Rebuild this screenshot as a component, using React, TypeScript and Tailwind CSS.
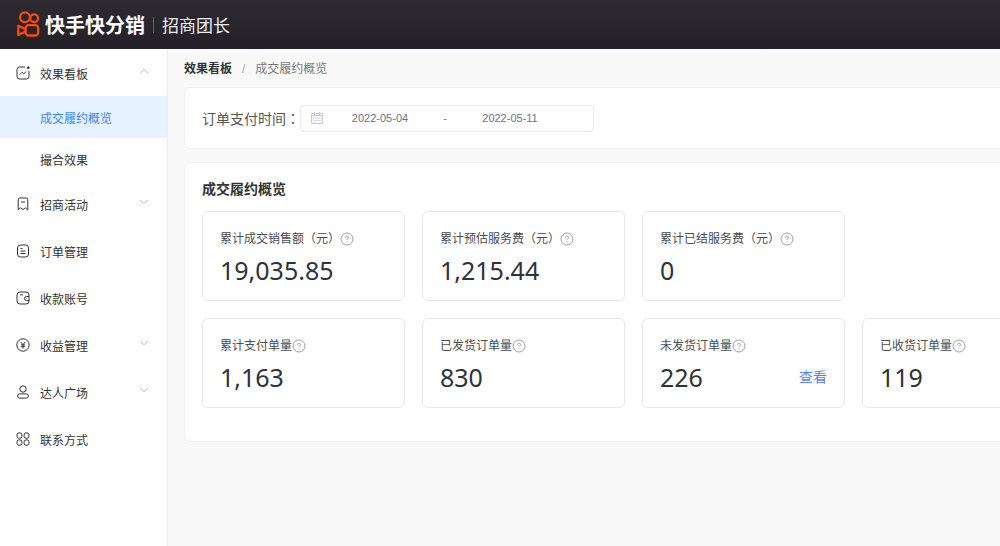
import { useState } from "react";
import type { ReactNode } from "react";
import { ChevronDown, ChevronUp } from "lucide-react";

type MenuItem = {
  label: string;
  icon: ReactNode;
  children?: string[];
};

type Metric = {
  label: string;
  value: string;
  link?: string;
};

const MENU: MenuItem[] = [
  {
    label: "效果看板",
    icon: (
      <>
        <path d="M9 1H3.500A2.500 2.500 0 0 0 1 3.500v7A2.500 2.500 0 0 0 3.500 13h7a2.500 2.500 0 0 0 2.500-2.500V5" />
        <path d="M3.800 8.500 6 6.300l1.700 1.600 2.500-2.300" />
        <circle cx="12.300" cy="1.700" r="0.900" fill="currentColor" />
      </>
    ),
    children: ["成交履约概览", "撮合效果"],
  },
  {
    label: "招商活动",
    icon: (
      <>
        <path d="M2.200 12.900V2.700A1.600 1.600 0 0 1 3.800 1h6.400a1.600 1.600 0 0 1 1.600 1.700v10.200l-2.500-2.100L7 12.600l-2.300-1.800z" />
        <path d="M5 5h4" />
      </>
    ),
    children: [],
  },
  {
    label: "订单管理",
    icon: (
      <>
        <rect x="1.500" y="1" width="11" height="12" rx="3" />
        <path d="M4.500 4.500h2M4.500 7h5M4.500 9.500h5" />
      </>
    ),
  },
  {
    label: "收款账号",
    icon: (
      <>
        <path d="M13 5.500V4a3 3 0 0 0-3-3H4a3 3 0 0 0-3 3v6a3 3 0 0 0 3 3h6a3 3 0 0 0 3-3V5.500h-2.500a2 2 0 0 0 0 4H13" />
        <path d="M4 3.800h3M10.500 7.500h.4" />
      </>
    ),
  },
  {
    label: "收益管理",
    icon: (
      <>
        <circle cx="7" cy="7" r="6.200" />
        <path d="m4.800 4 2.200 2.700L9.200 4M7 6.700v3.800M5 6.900h4M5 8.700h4" />
      </>
    ),
    children: [],
  },
  {
    label: "达人广场",
    icon: (
      <>
        <circle cx="7" cy="4" r="3.200" />
        <rect x="1.600" y="8.900" width="10.800" height="4.200" rx="2.100" />
      </>
    ),
    children: [],
  },
  {
    label: "联系方式",
    icon: (
      <>
        <rect x="1" y="0.900" width="4.900" height="5.300" rx="1.900" />
        <rect x="8.100" y="0.900" width="4.900" height="5.300" rx="1.900" />
        <rect x="1" y="7.900" width="4.900" height="5.300" rx="1.900" />
        <rect x="8.100" y="7.900" width="4.900" height="5.300" rx="1.900" />
      </>
    ),
  },
];

const METRICS: Metric[][] = [
  [
    { label: "累计成交销售额（元）", value: "19,035.85" },
    { label: "累计预估服务费（元）", value: "1,215.44" },
    { label: "累计已结服务费（元）", value: "0" },
  ],
  [
    { label: "累计支付单量", value: "1,163" },
    { label: "已发货订单量", value: "830" },
    { label: "未发货订单量", value: "226", link: "查看" },
    { label: "已收货订单量", value: "119" },
  ],
];

function Logo() {
  return (
    <svg viewBox="0 0 24 28" className="h-7 w-6 shrink-0" fill="none" stroke="#fb4a0e" strokeWidth="2.3" aria-hidden="true">
      <circle cx="9" cy="6.300" r="4.900" />
      <circle cx="18.200" cy="7.300" r="3.900" />
      <rect x="9.600" y="14.200" width="12.600" height="10.300" rx="3" />
      <path d="M9 18 2.300 14.800v9.200L9 20.800" strokeLinejoin="round" />
    </svg>
  );
}

function HelpIcon() {
  return (
    <svg viewBox="0 0 14 14" className="h-3.5 w-3.5 shrink-0" fill="none" stroke="#a0a2a8" aria-hidden="true">
      <circle cx="7" cy="7" r="6" />
      <path d="M5.500 5.700a1.500 1.500 0 1 1 2.200 1.300c-.5.300-.7.500-.7 1.100M7 9.300v1" />
    </svg>
  );
}

function CalendarIcon() {
  return (
    <svg viewBox="0 0 12 12" className="h-3 w-3 shrink-0" fill="none" stroke="#c9ccd6" aria-hidden="true">
      <path d="M.5 1.500h11v10H.5z" fill="#f3f4f8" />
      <path d="M.5 3.500h11M3.500 0v3M8.500 0v3" />
      <path d="M2.500 6h7M2.500 8.500h7" strokeDasharray="1 1" />
    </svg>
  );
}

function MetricCard({ metric }: { metric: Metric }) {
  return (
    <div className="rounded-md border border-[#e6e6e8] px-[17px] py-3">
      <div className="flex items-center pt-[5px] text-xs leading-5 text-[#4a4c50]">
        <span>{metric.label}</span>
        <HelpIcon />
      </div>
      <div className="mt-[3px] flex items-center justify-between">
        <span className="font-['Noto_Sans'] text-[25px] leading-9 text-[#2f3338]">{metric.value}</span>
        {metric.link && (
          <a href="#" className="text-sm leading-5 text-[#5b80f7]">
            {metric.link}
          </a>
        )}
      </div>
    </div>
  );
}

export default function App() {
  const [active, setActive] = useState("成交履约概览");
  const [open, setOpen] = useState("效果看板");
  const [start, setStart] = useState("2022-05-04");
  const [end, setEnd] = useState("2022-05-11");

  return (
    <div className="flex min-h-screen flex-col overflow-hidden bg-[#f9f9f9] font-['Liberation_Sans','Noto_Sans_CJK_SC',sans-serif] text-[#333]">
      <header className="flex h-[49px] items-center bg-linear-to-b from-[#2e2a32] to-[#242027] px-4 text-white">
        <Logo />
        <span className="ml-[5px] pt-0.5 text-xl leading-7 font-bold">快手快分销</span>
        <span className="ml-2 h-4 w-px bg-[#66636a]" />
        <span className="ml-2 pt-1 text-[17px] leading-7 text-[#ececee]">招商团长</span>
      </header>

      <div className="flex grow">
        <nav className="w-[168px] shrink-0 border-r border-[#ededef] bg-white text-xs">
          {MENU.map((item) => (
            <div key={item.label}>
              <button
                type="button"
                onClick={() => setOpen(open === item.label ? "" : item.label)}
                className="flex h-[47px] w-full items-center px-4"
              >
                <svg
                  viewBox="0 0 14 14"
                  className="h-3.5 w-3.5"
                  fill="none"
                  stroke="currentColor"
                  strokeLinejoin="round"
                  aria-hidden="true"
                >
                  {item.icon}
                </svg>
                <span className="ml-2.5 pt-1">{item.label}</span>
                {item.children && (
                  <span className="ml-auto pb-1 text-[#a9acb6]">
                    {open === item.label ? (
                      <ChevronUp size={14} strokeWidth={1.5} />
                    ) : (
                      <ChevronDown size={14} strokeWidth={1.5} />
                    )}
                  </span>
                )}
              </button>
              {open === item.label &&
                item.children?.map((child) => (
                  <a
                    key={child}
                    href="#"
                    onClick={() => setActive(child)}
                    className={`flex h-[42px] items-center pt-1 pl-10 ${
                      active === child ? "bg-[#e6f2ff] text-[#3c86fb]" : ""
                    }`}
                  >
                    {child}
                  </a>
                ))}
            </div>
          ))}
        </nav>

        <main className="min-w-[915px] grow px-4">
          <div className="flex h-[38px] items-center pt-0.5 text-xs">
            <span className="font-bold">效果看板</span>
            <span className="mx-2.5 text-[#a5a7ac]">/</span>
            <span className="text-[#77797d]">成交履约概览</span>
          </div>

          <section className="flex h-[62px] items-center rounded-md border border-[#f0f0f5] bg-white px-[17px]">
            <label htmlFor="start" className="text-sm leading-5 text-[#55575b]">
              订单支付时间<span className="font-['Noto_Sans_CJK_TC']">：</span>
            </label>
            <div className="flex h-[27px] w-[294px] items-center rounded border border-[#e8e9f0] pl-2.5 text-[11px] text-[#707277]">
              <CalendarIcon />
              <input
                id="start"
                value={start}
                onChange={(e) => setStart(e.target.value)}
                className="w-[114px] text-center outline-none"
              />
              <span className="w-4 text-center">-</span>
              <input
                aria-label="结束日期"
                value={end}
                onChange={(e) => setEnd(e.target.value)}
                className="w-[114px] text-center outline-none"
              />
            </div>
          </section>

          <section className="mt-[13px] rounded-md border border-[#f0f0f5] bg-white px-[17px] pt-3.5 pb-[33px]">
            <h2 className="text-sm leading-6 font-bold">成交履约概览</h2>
            <div className="mt-2.5 space-y-[17px]">
              {METRICS.map((row, i) => (
                <div key={i} className="grid grid-cols-[repeat(4,203px)] gap-[17px]">
                  {row.map((metric) => (
                    <MetricCard key={metric.label} metric={metric} />
                  ))}
                </div>
              ))}
            </div>
          </section>
        </main>
      </div>
    </div>
  );
}
